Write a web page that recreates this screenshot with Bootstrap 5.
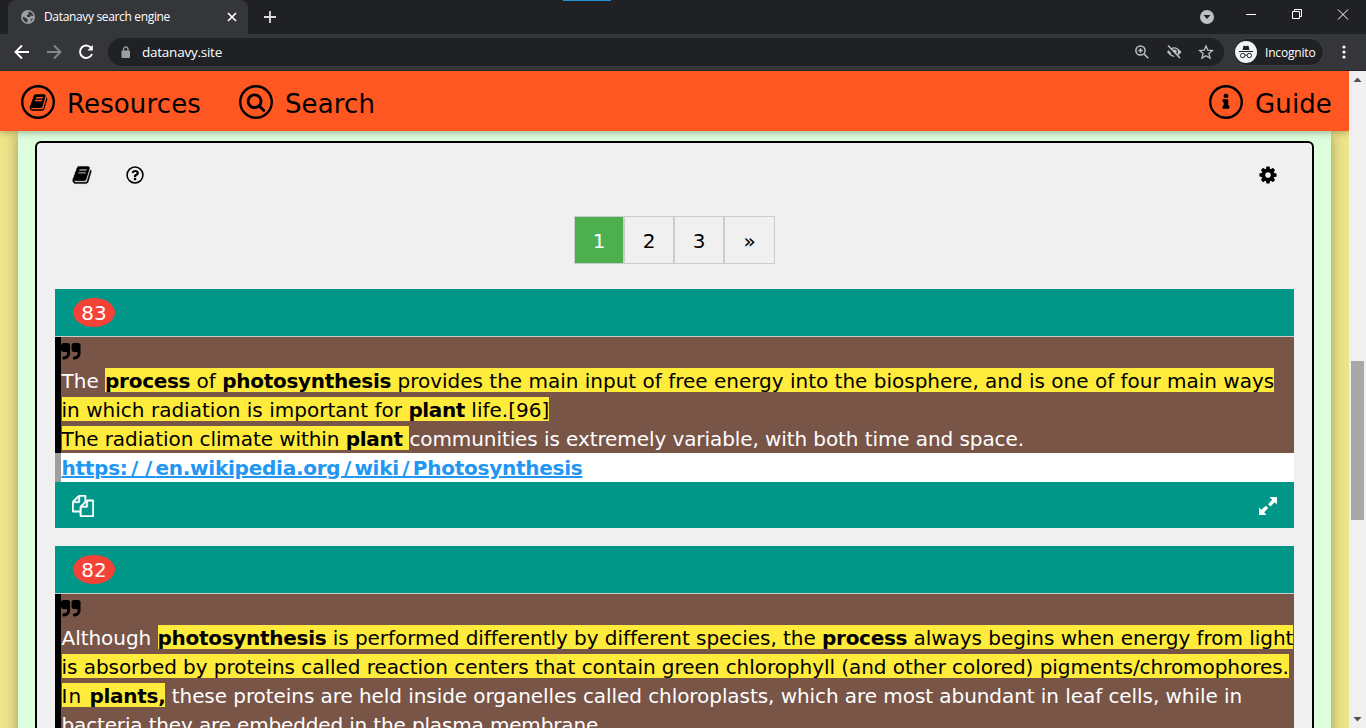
<!DOCTYPE html>
<html lang="en">
<head>
<meta charset="utf-8">
<title>Datanavy search engine</title>
<link rel="stylesheet" href="https://cdn.jsdelivr.net/npm/bootstrap@5.3.0/dist/css/bootstrap.min.css">
<style>
html,body{height:100%;overflow:hidden}
body{font-family:"DejaVu Sans",Verdana,sans-serif;font-size:20px;line-height:29px;color:#000;background:#202124}
svg{display:block;flex:none}
.ic{fill:currentColor}
.ui{font-family:"Open Sans","Noto Sans",sans-serif;color:#fff}
.tabs{height:34px;background:#202124}
.blue-line{left:563px;top:0;width:48px;height:1px;background:#2393d6}
.tab-item{width:240px;margin-left:8px;background:#35363a;border-radius:8px 8px 0 0;font-size:12px;line-height:34px}
.tab-title{margin-left:9px;letter-spacing:-.34px}
.favicon{margin-left:13px}
.tools{height:37px;background:#35363a;border-bottom:1px solid #28292c}
.omni{height:28px;width:1116px;border-radius:14px;background:#202124;font-size:13.5px;line-height:28px}
.address{margin-left:11px;letter-spacing:-.24px}
.incog{height:28px;width:91px;margin-left:9px;border-radius:14px;background:#202124;border:1px solid #3c4043;font-size:12px}
.incog span{margin-left:8px;letter-spacing:-.18px}
.view{height:657px}
.page{width:1349px;height:657px;background:#f0e68c;overflow:hidden}
.topnav{height:60px;padding:2px 17px 0 21px;background:#ff5722;font-size:26px;line-height:58px;box-shadow:0 2px 5px rgba(0,0,0,.16),0 2px 10px rgba(0,0,0,.12);z-index:2}
.topnav .label{margin-left:12px;padding-top:3px;letter-spacing:.13px}
.ring{width:34px;height:34px;border-radius:50%;box-shadow:inset 0 0 0 2.4px #000}
.sheet{margin:0 18px;padding:10px 17px 0;height:640px;background:#dfd;box-shadow:0 4px 10px rgba(0,0,0,.2),0 4px 20px rgba(0,0,0,.19)}
.panel{height:700px;border:2px solid #000;border-radius:6px;background:#f0f0f0;padding:0 18px}
.panel-tools{height:64px;padding:0 16px 0 17px}
.pg{margin:9px 0 25px}
.pg a{width:50px;height:48px;border:1px solid #ccc;text-align:center;line-height:48px;color:#000;text-decoration:none}
.pg a:last-child{width:51px}
.pg .on{background:#4caf50;color:#fff}
.result{margin-bottom:18px}
.teal{background:#009688;color:#fff}
.res-h{height:48px;border-bottom:1px solid #ccc;padding:9px 18px}
.count{width:42px;height:29px;border-radius:50%;background:#f44336;text-align:center;line-height:30px}
.quote{background:#795548;color:#fff;border-left:6px solid #000;white-space:nowrap}
.quote>div{height:29px;padding-left:.5px;line-height:31px}
.quote>.mark-row{padding-left:0}
.quote b{letter-spacing:-.28px}
.hl{padding-top:1px;background:linear-gradient(#ffeb3b,#ffeb3b) 0 0/100% 24px no-repeat;color:#000}
.src{height:29px;padding-left:.5px;line-height:31px;background:#fff;border-left:6px solid #9e9e9e;white-space:nowrap}
.src a{color:#2196f3;font-weight:700;text-decoration:underline;letter-spacing:-.25px}
.src i{font-style:normal;letter-spacing:3.2px}
.src i.pair{letter-spacing:6.6px}
.res-f{height:46px;padding:1px 16px 0 17px}
.bar{width:17px;background:#f0f0f0}
.thumb{width:13px;height:159px;background:#a8a8a8;margin:276px 0 0 2px}
.s1{letter-spacing:-.005px}.s2{letter-spacing:.02px}.s3{letter-spacing:-.085px}
.s4{letter-spacing:-.045px}.s5{letter-spacing:-.05px}.s6{letter-spacing:-.065px}.s7{letter-spacing:-.15px}
.s2 b{letter-spacing:-.4px}
.s6 .wide{letter-spacing:1px}
</style>
</head>
<body>
<svg width="0" height="0" class="position-absolute">
<symbol id="book" viewBox="0 0 1792 1792"><path d="M1703 478q40 57 18 129l-275 906q-19 64-76.500 107.500t-122.500 43.500h-923q-77 0-148.500-53.500t-99.500-131.500q-24-67-2-127 0-4 3-27t4-37q1-8-3-21.500t-3-19.500q2-11 8-21t16.500-23.500 16.500-23.500q23-38 45-91.500t30-91.500q3-10 .5-30t-.5-28q3-11 17-28t17-23q21-36 42-92t25-90q1-9-2.500-32t.5-28q4-13 22-30.500t22-22.500q19-26 42.500-84.500t27.500-96.500q1-8-3-25.500t-2-26.500q2-8 9-18t18-23 17-21q8-12 16.500-30.500t15-35 16-36 19.500-32 26.500-23.500 36-11.500 47.500 5.500l-1 3q38-9 51-9h761q74 0 114 56t18 130l-274 906q-36 119-71.500 153.500t-128.500 34.500h-869q-27 0-38 15-11 16-1 43 24 70 144 70h923q29 0 56-15.500t35-41.500l300-987q7-22 5-57 38 15 59 43zm-1064 2q-4 13 2 22.500t20 9.500h608q13 0 25.500-9.500t16.500-22.500l21-64q4-13-2-22.500t-20-9.500h-608q-13 0-25.500 9.500t-16.500 22.500zm-83 256q-4 13 2 22.500t20 9.500h608q13 0 25.500-9.500t16.500-22.500l21-64q4-13-2-22.500t-20-9.500h-608q-13 0-25.500 9.500t-16.500 22.500z"/></symbol>
<symbol id="quote" viewBox="0 0 1792 1792"><path d="M832 320v704q0 104-40.500 198.500t-109.500 163.500-163.500 109.500-198.500 40.500h-64q-26 0-45-19t-19-45v-128q0-26 19-45t45-19h64q106 0 181-75t75-181v-32q0-40-28-68t-68-28h-224q-80 0-136-56t-56-136v-384q0-80 56-136t136-56h384q80 0 136 56t56 136z"/><path transform="translate(896)" d="M832 320v704q0 104-40.500 198.500t-109.500 163.500-163.500 109.500-198.500 40.500h-64q-26 0-45-19t-19-45v-128q0-26 19-45t45-19h64q106 0 181-75t75-181v-32q0-40-28-68t-68-28h-224q-80 0-136-56t-56-136v-384q0-80 56-136t136-56h384q80 0 136 56t56 136z"/></symbol>
</svg>
<div class="d-flex flex-column ui">
  <div class="tabs d-flex position-relative">
    <div class="blue-line position-absolute"></div>
    <div class="tab-item d-flex align-items-center">
      <svg class="favicon" width="14" height="14" viewBox="0 0 14 14"><circle cx="7" cy="7" r="7" fill="#9aa0a6"/><path d="M1.500 6.500 5 8l1.500 1v3.500Q2 12 1.500 6.500zM7.500 1.500Q11.500 2 12.500 6l-2.500-.5-1 1.500H6.500L5.500 5.500l2-1zM10 9l2-.5q-.8 2-2.500 3.200z" fill="#35363a"/></svg>
      <span class="tab-title">Datanavy search engine</span>
      <svg class="ms-auto me-2" width="16" height="16" viewBox="0 0 16 16"><path d="m4 4 8 8m0-8-8 8" stroke="#fff" stroke-width="1.700"/></svg>
    </div>
    <svg class="align-self-center" style="margin-left:14px" width="16" height="16" viewBox="0 0 16 16"><path d="M8 2v12M2 8h12" stroke="#ddd" stroke-width="1.800"/></svg>
    <svg class="ms-auto" width="170" height="34" viewBox="1196 0 170 34"><circle cx="1207" cy="17" r="7" fill="#bdc1c6"/><path d="M1203.500 15h7l-3.500 4z" fill="#202124"/><path d="M1246 14.500h10M1292.500 11.500h7v7h-7zM1294.500 11v-1.500h7v7h-1.500M1338 9.500l10 10m0-10-10 10" fill="none" stroke="#fff"/></svg>
  </div>
  <div class="tools d-flex align-items-center">
    <svg width="108" height="36" viewBox="0 34 108 36" fill="none" stroke="#fff" stroke-width="1.900"><path d="M29 52H16M22 45.500 15.500 52l6.500 6.500"/><path d="M47 52h13M54 45.500l6.500 6.500-6.500 6.500" stroke="#85868a"/><path d="M91.500 48.500a6.200 6.200 0 1 0 .5 5.500"/><path d="M87.500 50.500h5.300V45z" fill="#fff" stroke="none"/></svg>
    <div class="omni d-flex align-items-center">
      <svg style="margin-left:13px" width="10" height="13" viewBox="0 0 10 13"><rect x=".5" y="4.500" width="8.500" height="7.500" rx="1" fill="#9aa0a6"/><path d="M2.500 5V3.200a2.200 2.200 0 0 1 4.500 0V5" fill="none" stroke="#9aa0a6" stroke-width="1.300"/></svg>
      <span class="address">datanavy.site</span>
      <svg class="ms-auto" width="94" height="28" viewBox="1130 38 94 28" fill="none" stroke="#bdc1c6" stroke-width="1.500"><circle cx="1140.500" cy="50.500" r="4.600"/><path d="m1144 54 4.300 4.300M1138.300 50.500h4.400M1140.500 48.300v4.400"/><path d="M1167 52q7-9.500 14.500 0-7.500 9.500-14.500 0z" fill="#bdc1c6" stroke="none"/><circle cx="1174.300" cy="52" r="3" stroke="#202124" stroke-width="1.200"/><path d="m1167 46.500 11.500 12" stroke="#202124" stroke-width="3"/><path d="m1168 45.500 12 12.500"/><path d="m1206 46 1.800 4.200 4.600.4-3.500 3 1.100 4.500-4-2.400-4 2.400 1.100-4.500-3.500-3 4.600-.4z" stroke-width="1.300"/></svg>
    </div>
    <div class="incog d-flex align-items-center">
      <svg style="margin-left:1px" width="22" height="22" viewBox="0 0 22 22"><circle cx="11" cy="11" r="11" fill="#f1f3f4"/><path d="M7.500 9 8.500 4.800h1.300l1.200.5 1.200-.5h1.300l1 4.200zM4 10h14v1H4z" fill="#202124"/><g fill="none" stroke="#202124"><circle cx="7.700" cy="14.500" r="2.200"/><circle cx="14.300" cy="14.500" r="2.200"/><path d="M10 14.300q1-.6 2 0"/></g></svg>
      <span>Incognito</span>
    </div>
    <svg class="ms-auto" style="margin-right:14px" width="16" height="16" viewBox="0 0 16 16" fill="#fff"><circle cx="8" cy="3" r="1.600"/><circle cx="8" cy="8" r="1.600"/><circle cx="8" cy="13" r="1.600"/></svg>
  </div>
</div>
<div class="view d-flex">
  <div class="page">
    <nav class="topnav d-flex align-items-center position-relative">
      <span class="ring d-flex align-items-center justify-content-center"><svg class="ic" width="19" height="19"><use href="#book"/></svg></span>
      <span class="label">Resources</span>
      <span class="ring d-flex align-items-center justify-content-center" style="margin-left:38px"><svg class="ic" width="20" height="20" viewBox="0 0 1792 1792"><path d="M1216 832q0-185-131.500-316.500t-316.500-131.500-316.500 131.500-131.500 316.500 131.500 316.500 316.500 131.500 316.500-131.500 131.500-316.500zm512 832q0 52-38 90t-90 38q-54 0-90-38l-343-342q-179 124-399 124-143 0-273.500-55.500t-225-150-150-225-55.500-273.500 55.500-273.500 150-225 225-150 273.500-55.500 273.500 55.500 225 150 150 225 55.500 273.500q0 220-124 399l343 343q37 37 37 90z"/></svg></span>
      <span class="label">Search</span>
      <span class="ring ms-auto d-flex align-items-center justify-content-center"><svg class="ic" width="18" height="18" viewBox="0 0 1792 1792"><path d="M1216 1344v128q0 26-19 45t-45 19h-512q-26 0-45-19t-19-45v-128q0-26 19-45t45-19h64v-384h-64q-26 0-45-19t-19-45v-128q0-26 19-45t45-19h384q26 0 45 19t19 45v576h64q26 0 45 19t19 45zm-128-1152v192q0 26-19 45t-45 19h-256q-26 0-45-19t-19-45v-192q0-26 19-45t45-19h256q26 0 45 19t19 45z" stroke="currentColor" stroke-width="60"/></svg></span>
      <span class="label">Guide</span>
    </nav>
    <main class="sheet">
      <div class="panel">
        <div class="panel-tools d-flex align-items-center">
          <svg class="ic" width="20" height="20"><use href="#book" stroke="currentColor" stroke-width="40"/></svg>
          <svg class="ic" style="margin-left:33px" width="20" height="20" viewBox="0 0 1792 1792"><circle cx="896" cy="896" r="710" fill="none" stroke="currentColor" stroke-width="140"/><path transform="translate(60 65) scale(.94)" d="M1008 1200v160q0 14-9 23t-23 9h-160q-14 0-23-9t-9-23v-160q0-14 9-23t23-9h160q14 0 23 9t9 23zm256-496q0 50-15 90t-45.500 69-52 44-59.500 36q-32 18-46.500 28t-26 24-11.500 29v32q0 14-9 23t-23 9h-160q-14 0-23-9t-9-23v-68q0-35 10.500-64.500t24-47.500 39-35.500 41-25.500 44.500-21q53-25 75-43t22-49q0-42-43.500-71.500t-95.500-29.500q-56 0-95 27-29 20-80 83-9 12-25 12-11 0-19-6l-108-82q-10-7-12-20t5-23q122-192 349-192 129 0 238.500 89.500t109.500 214.500z"/></svg>
          <svg class="ic ms-auto" width="20" height="20" viewBox="0 0 1792 1792"><path d="M1152 896q0-106-75-181t-181-75-181 75-75 181 75 181 181 75 181-75 75-181zm512-109v222q0 12-8 23t-20 13l-185 28q-19 54-39 91 35 50 107 138 10 12 10 25t-9 23q-27 37-99 108t-94 71q-12 0-26-9l-138-108q-44 23-91 38-16 136-29 186-7 28-36 28h-222q-14 0-24.500-8.500t-11.500-21.500l-28-184q-49-16-90-37l-141 107q-10 9-25 9-14 0-25-11-126-114-165-168-7-10-7-23 0-12 8-23 15-21 51-66.500t54-70.500q-27-50-41-99l-183-27q-13-2-21-12.500t-8-23.500v-222q0-12 8-23t19-13l186-28q14-46 39-92-40-57-107-138-10-12-10-24 0-10 9-23 26-36 98.500-107.500t94.500-71.500q13 0 26 10l138 107q44-23 91-38 16-136 29-186 7-28 36-28h222q14 0 24.500 8.500t11.500 21.500l28 184q49 16 90 37l142-107q9-9 24-9 13 0 25 10 129 119 165 170 7 8 7 22 0 12-8 23-15 21-51 66.500t-54 70.500q26 50 41 98l183 28q13 2 21 12.500t8 23.500z"/></svg>
        </div>
        <nav class="pg d-flex justify-content-center"><a class="on" href="#">1</a><a href="#">2</a><a href="#">3</a><a href="#">»</a></nav>
        <article class="result">
          <div class="res-h teal"><div class="count">83</div></div>
          <div class="quote">
            <div class="mark-row"><svg width="20" height="29" viewBox="0 0 20 29"><use href="#quote" width="21" height="21" x="-.7" y="4.500"/></svg></div>
            <div class="s1">The <span class="hl"><b>process</b> of <b>photosynthesis</b> provides the main input of free energy into the biosphere, and is one of four main ways</span></div>
            <div class="s2"><span class="hl">in which radiation is important for <b>plant</b> life.[96]</span></div>
            <div class="s3"><span class="hl">The radiation climate within <b>plant </b></span>communities is extremely variable, with both time and space.</div>
          </div>
          <div class="src"><a href="#">https<i>:</i><i class="pair">/</i><i>/</i>en.wikipedia.or<i>g/</i>wik<i>i/</i>Photosynthesis</a></div>
          <div class="res-f teal d-flex align-items-center justify-content-between">
            <svg class="ic" width="22" height="22" viewBox="0 0 1792 1792"><path stroke="currentColor" stroke-width="40" d="M1696 384q40 0 68 28t28 68v1216q0 40-28 68t-68 28h-960q-40 0-68-28t-28-68v-288h-544q-40 0-68-28t-28-68v-672q0-40 20-88t48-76l408-408q28-28 76-48t88-20h416q40 0 68 28t28 68v328q68-40 128-40h416zm-544 213l-299 299h299v-299zm-640-384l-299 299h299v-299zm196 647l316-316v-416h-384v416q0 40-28 68t-68 28h-416v640h512v-256q0-40 20-88t48-76zm956 804v-1152h-384v416q0 40-28 68t-68 28h-416v640h896z"/></svg>
            <svg class="ic" width="20" height="20" viewBox="0 0 20 20"><path d="M11.500 1H19v7.500l-2.200-2.200-4.500 4.200-2.200-2.200 4-4.500zM8 9.800l2.200 2.200-4 4.300 2.200 2.700H1v-7.500l2.200 2.200z"/></svg>
          </div>
        </article>
        <article class="result">
          <div class="res-h teal"><div class="count">82</div></div>
          <div class="quote">
            <div class="mark-row"><svg width="20" height="29" viewBox="0 0 20 29"><use href="#quote" width="21" height="21" x="-.7" y="4.500"/></svg></div>
            <div class="s4">Although <span class="hl"><b>photosynthesis</b> is performed differently by different species, the <b>process</b> always begins when energy from light</span></div>
            <div class="s5"><span class="hl">is absorbed by proteins called reaction centers that contain green chlorophyll (and other colored) pigments/chromophores.</span></div>
            <div class="s6"><span class="hl"><span class="wide">In </span><b>plants,</b></span> these proteins are held inside organelles called chloroplasts, which are most abundant in leaf cells, while in</div>
            <div class="s7">bacteria they are embedded in the plasma membrane.</div>
          </div>
        </article>
      </div>
    </main>
  </div>
  <div class="bar d-flex flex-column">
    <svg width="17" height="14" viewBox="0 0 17 14"><path d="M4.500 11h8l-4-4.500z" fill="#505050"/></svg>
    <div class="thumb"></div>
    <svg class="mt-auto" width="17" height="14" viewBox="0 0 17 14"><path d="M4.500 3h8l-4 4.500z" fill="#505050"/></svg>
  </div>
</div>
<script src="https://cdn.jsdelivr.net/npm/bootstrap@5.3.0/dist/js/bootstrap.bundle.min.js"></script>
</body>
</html>
